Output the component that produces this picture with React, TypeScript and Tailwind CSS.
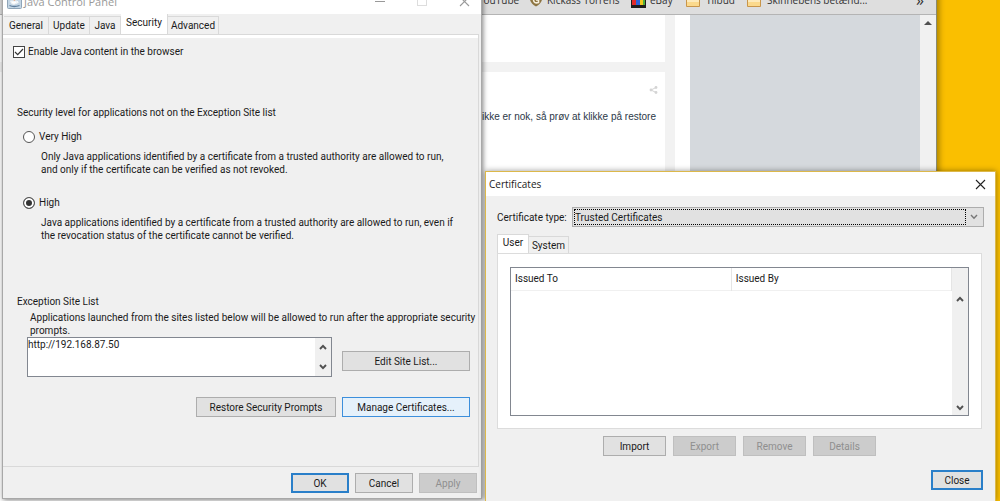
import { useState } from "react";
import type { ReactNode } from "react";

const ChevronIcon = ({ up = false, light = false }: { up?: boolean; light?: boolean }) => (
  <svg width="8" height="6" viewBox="0 0 8 6" fill="none" aria-hidden="true">
    <path
      d={up ? "M1 5 L4 1.8 L7 5" : "M1 1 L4 4.2 L7 1"}
      stroke={light ? "#777777" : "#505050"}
      strokeWidth={light ? 1.4 : 1.9}
    />
  </svg>
);

const CloseIcon = ({ color }: { color: string }) => (
  <svg width="11" height="11" viewBox="0 0 11 11" aria-hidden="true">
    <path d="M1 1 L10 10 M10 1 L1 10" stroke={color} strokeWidth="1.1" fill="none" />
  </svg>
);

const JavaIcon = () => (
  <svg width="15" height="16" viewBox="0 0 15 16" aria-hidden="true">
    <rect x="0.5" y="0.5" width="14" height="15" rx="1" fill="#c3d5e4" stroke="#8fa5b8" />
    <path d="M8 1.5 C5 4 9.5 5 7 8" stroke="#e07a3a" strokeWidth="1.3" fill="none" />
    <path d="M3.5 8 H10 V10 Q7 12.5 4.5 10.5 Z" fill="#ffffff" stroke="#e8eef3" />
    <path d="M10 8.5 Q12.5 8.5 10 10.5" stroke="#ffffff" fill="none" />
    <path d="M2.5 12.5 Q7 14.5 12.5 12.5" stroke="#5f7f9e" strokeWidth="1.3" fill="none" />
  </svg>
);

const FolderIcon = () => (
  <svg width="14" height="13" viewBox="0 0 14 13" className="shrink-0" aria-hidden="true">
    <path d="M0.5 1.5 H5 L6.5 3 H13.5 V12.5 H0.5 Z" fill="#fbd98c" stroke="#c8954a" />
    <path d="M1 5 H13 V8 H1 Z" fill="#fdeabb" />
  </svg>
);

const KickassIcon = () => (
  <svg width="14" height="14" viewBox="0 0 14 14" className="shrink-0" aria-hidden="true">
    <path d="M0.5 2 Q7 -1 13.5 2 Q14 10 7 13.5 Q0 10 0.5 2 Z" fill="#8d7442" />
    <path d="M9.5 4 Q5 3 4.5 7 Q5 11 9.5 9.5 V7 H7" stroke="#f6efdc" strokeWidth="1.6" fill="none" />
  </svg>
);

const EbayIcon = () => (
  <svg width="15" height="15" viewBox="0 0 15 15" className="shrink-0" aria-hidden="true">
    <rect width="15" height="15" fill="#1d1d1d" />
    <rect x="1" y="3" width="4" height="9" fill="#e02a2a" />
    <rect x="5" y="3" width="4" height="9" fill="#2a62d8" />
    <rect x="9" y="3" width="3" height="9" fill="#f3c81d" />
    <rect x="12" y="3" width="2" height="9" fill="#4fae3a" />
  </svg>
);

const ShareIcon = () => (
  <svg width="9" height="8" viewBox="0 0 9 8" aria-hidden="true">
    <path d="M7 1.5 L2 4 L7 6.5" stroke="#d4d4d4" fill="none" />
    <circle cx="7" cy="1.5" r="1.4" fill="#d4d4d4" />
    <circle cx="2" cy="4" r="1.4" fill="#d4d4d4" />
    <circle cx="7" cy="6.5" r="1.4" fill="#d4d4d4" />
  </svg>
);

const buttonStyles = {
  normal: "border border-[#adadad] bg-[#e1e1e1]",
  hover: "border border-[#3c8fdc] bg-[#e5f1fb]",
  focus: "border-2 border-[#2a7fc9] bg-[#e1e1e1]",
  disabled: "border border-[#bfbfbf] bg-[#cccccc] text-[#8f8f8f]",
};

const Button = ({
  children,
  variant = "normal",
  width,
}: {
  children: ReactNode;
  variant?: keyof typeof buttonStyles;
  width: string;
}) => (
  <button
    type="button"
    disabled={variant === "disabled"}
    className={`flex h-5 shrink-0 items-center justify-center whitespace-nowrap ${buttonStyles[variant]} ${width}`}
  >
    {children}
  </button>
);

const Browser = () => (
  <div className="absolute -top-4 right-[63px] bottom-0 left-0 flex flex-col border-r border-[#8a8a72] bg-white shadow-[2px_0_6px_rgba(0,0,0,0.35)]">
    <nav className="flex h-[31px] shrink-0 items-center border-b border-[#b4b4b4] bg-[#dedede] pt-[2px] pr-3 pl-[478px] font-['Open_Sans',sans-serif] text-[10px] whitespace-nowrap text-[#333333]">
      <a href="#youtube" className="w-[51px]">YouTube</a>
      <a href="#kickass" className="flex w-[102px] items-center gap-1">
        <KickassIcon />
        Kickass Torrens
      </a>
      <a href="#ebay" className="flex w-[55px] items-center gap-1">
        <EbayIcon />
        eBay
      </a>
      <a href="#tilbud" className="flex w-[61px] items-center gap-[6px]">
        <FolderIcon />
        Tilbud
      </a>
      <a href="#skinneben" className="flex items-center gap-[6px]">
        <FolderIcon />
        Skinnebens betænd...
      </a>
      <button type="button" className="ml-auto text-base leading-4" aria-label="More bookmarks">
        »
      </button>
    </nav>
    <div className="flex flex-1">
      <main className="mr-[15px] flex min-w-0 flex-1 flex-col gap-[10px] bg-[#f2f2f2] pr-[10px]">
        <div className="h-[47px] bg-white" />
        <article className="flex-1 bg-white pt-[14px]">
          <div className="flex justify-end pr-[7px]">
            <ShareIcon />
          </div>
          <p className="pt-[15px] pl-[482px] font-['Liberation_Sans',sans-serif] text-[10px] leading-4 whitespace-nowrap text-[#2c3848]">
            ikke er nok, så prøv at klikke på restore
          </p>
        </article>
      </main>
      <aside className="w-[230px] bg-[#d5d9dd]" />
      <div className="flex w-4 justify-center bg-[#f1f1f1] pt-[6px]">
        <svg width="8" height="4" viewBox="0 0 8 4" aria-hidden="true">
          <path d="M4 0 L8 4 H0 Z" fill="#505050" />
        </svg>
      </div>
    </div>
  </div>
);

const javaTabs = [
  { name: "General", width: "w-[45px]" },
  { name: "Update", width: "w-[41px]" },
  { name: "Java", width: "w-[31px]" },
  { name: "Security", width: "w-[47px]" },
  { name: "Advanced", width: "w-[51px]" },
];

const levels = [
  {
    id: "very-high",
    name: "Very High",
    lines: [
      "Only Java applications identified by a certificate from a trusted authority are allowed to run,",
      "and only if the certificate can be verified as not revoked.",
    ],
  },
  {
    id: "high",
    name: "High",
    lines: [
      "Java applications identified by a certificate from a trusted authority are allowed to run, even if",
      "the revocation status of the certificate cannot be verified.",
    ],
  },
];

const JavaControlPanel = () => {
  const [enabled, setEnabled] = useState(true);
  const [level, setLevel] = useState("high");

  return (
    <section className="absolute -top-4 left-[2px] w-[48%] border border-[#a8a8a8] bg-[#f0f0f0] shadow-[1px_1px_5px_rgba(0,0,0,0.5)]">
      <header className="flex h-[29px] items-center bg-white pt-[3px] pr-[11px] pl-1 text-[#999999]">
        <JavaIcon />
        <h1 className="ml-[2px] font-['Open_Sans',sans-serif] text-[11px]">Java Control Panel</h1>
        <div className="ml-auto flex items-center gap-8">
          <button type="button" aria-label="Minimize">
            <svg width="10" height="10" viewBox="0 0 10 10">
              <path d="M0 5.5 H10" stroke="#999999" />
            </svg>
          </button>
          <button type="button" aria-label="Maximize">
            <svg width="10" height="10" viewBox="0 0 10 10">
              <rect x="0.5" y="0.5" width="9" height="9" stroke="#dddddd" fill="none" />
            </svg>
          </button>
          <button type="button" aria-label="Close window">
            <CloseIcon color="#999999" />
          </button>
        </div>
      </header>

      <div className="flex h-5 items-end pl-px" role="tablist">
        {javaTabs.map((tab) => (
          <button
            key={tab.name}
            type="button"
            role="tab"
            aria-selected={tab.name === "Security"}
            className={`flex items-center justify-center border-r border-[#d9d9d9] ${tab.width} ${
              tab.name === "Security" ? "h-5 bg-white pb-1" : "h-[18px] border-t"
            }`}
          >
            {tab.name}
          </button>
        ))}
      </div>

      <div className="mr-[2px] border-t border-r border-b border-[#d9d9d9]">
        <div className="h-[3px] bg-white" />
        <div className="pt-[7px] pr-2 pb-[49px] pl-[10px]">
          <label className="flex items-center gap-[3px]">
            <input
              type="checkbox"
              checked={enabled}
              onChange={() => setEnabled(!enabled)}
              className="peer sr-only"
            />
            <span className="flex size-3 items-center justify-center border border-[#444444] bg-white">
              {enabled && (
                <svg width="10" height="8" viewBox="0 0 10 8" aria-hidden="true">
                  <path d="M1 4 L3.7 6.7 L9 1" stroke="#333333" strokeWidth="1.2" fill="none" />
                </svg>
              )}
            </span>
            Enable Java content in the browser
          </label>

          <fieldset className="mt-12 pl-1">
            <legend>Security level for applications not on the Exception Site list</legend>
            {levels.map((item, i) => (
              <div key={item.id} className={i === 0 ? "mt-[11px]" : "mt-5"}>
                <label className="flex items-center gap-1 pl-[6px]">
                  <input
                    type="radio"
                    name="level"
                    checked={level === item.id}
                    onChange={() => setLevel(item.id)}
                    className="size-3 appearance-none rounded-full border border-[#555555] bg-white checked:bg-[#333333] checked:shadow-[inset_0_0_0_2px_#ffffff]"
                  />
                  {item.name}
                </label>
                <p className="mt-[7px] pl-6 whitespace-nowrap">
                  {item.lines[0]}
                  <br />
                  {item.lines[1]}
                </p>
              </div>
            ))}
          </fieldset>

          <div className="mt-[53px] pl-1">
            <label htmlFor="sites">Exception Site List</label>
            <p className="mt-[3px] pl-[13px] whitespace-nowrap">
              Applications launched from the sites listed below will be allowed to run after the appropriate security
              <br />
              prompts.
            </p>
            <div className="flex items-end gap-[10px] pl-[10px]">
              <div className="flex h-10 flex-1 border border-[#828790] bg-white">
                <textarea
                  id="sites"
                  defaultValue="http://192.168.87.50"
                  className="min-w-0 flex-1 resize-none overflow-hidden outline-none"
                />
                <div className="flex w-4 flex-col items-center justify-between bg-[#f0f0f0] py-[6px]">
                  <ChevronIcon up />
                  <ChevronIcon />
                </div>
              </div>
              <div className="mb-[6px]">
                <Button width="w-32">Edit Site List...</Button>
              </div>
            </div>
            <div className="mt-5 flex justify-end gap-[6px]">
              <Button width="w-[140px]">Restore Security Prompts</Button>
              <Button width="w-32" variant="hover">
                Manage Certificates...
              </Button>
            </div>
          </div>
        </div>
      </div>

      <footer className="flex justify-end gap-[6px] pt-[6px] pr-1 pb-[5px]">
        <Button width="w-[58px]" variant="focus">OK</Button>
        <Button width="w-[58px]">Cancel</Button>
        <Button width="w-[58px]" variant="disabled">Apply</Button>
      </footer>
    </section>
  );
};

const CertificatesDialog = () => (
  <section className="absolute top-[171px] right-1 bottom-0 left-[485px] flex flex-col border border-b-0 border-[#dcb84a] bg-[#f0f0f0] shadow-[0_0_6px_rgba(0,0,0,0.4)]">
    <header className="flex h-6 items-center justify-between bg-white pr-[9px] pl-[3px]">
      <h2 className="font-['Open_Sans',sans-serif] text-[10px]">Certificates</h2>
      <button type="button" aria-label="Close dialog">
        <CloseIcon color="#222222" />
      </button>
    </header>

    <div className="flex flex-1 flex-col px-[11px] pt-[11px]">
      <div className="flex items-center">
        <label htmlFor="cert-type" className="w-[75px] whitespace-nowrap">Certificate type:</label>
        <div className="flex h-5 flex-1 items-center border border-[#adadad] bg-[#e1e1e1] p-px">
          <select
            id="cert-type"
            className="h-4 flex-1 appearance-none border border-dotted border-black"
          >
            <option>Trusted Certificates</option>
            <option>Secure Site</option>
          </select>
          <span className="flex w-4 justify-center">
            <ChevronIcon light />
          </span>
        </div>
      </div>

      <div className="mt-[7px] flex h-[19px] items-end" role="tablist">
        <button type="button" role="tab" aria-selected="true" className="h-[19px] w-8 border border-b-0 border-[#d9d9d9] bg-white pb-1">
          User
        </button>
        <button type="button" role="tab" aria-selected="false" className="h-[17px] w-10 border border-b-0 border-l-0 border-[#d9d9d9]">
          System
        </button>
      </div>
      <div className="mr-[2px] border border-[#dcdcdc] bg-white px-3 pt-[13px] pb-3">
        <div className="flex h-[149px] border border-[#828790]">
          <div className="flex-1">
            <table className="w-full table-fixed text-left">
              <thead>
                <tr className="h-[22px] border-b border-[#f0f0f0]">
                  <th className="border-r border-[#e5e5e5] pl-1 font-normal">Issued To</th>
                  <th className="border-r border-[#e5e5e5] pl-1 font-normal">Issued By</th>
                </tr>
              </thead>
            </table>
          </div>
          <div className="flex w-4 flex-col items-center justify-between bg-[#f0f0f0] pt-7 pb-1">
            <ChevronIcon up />
            <ChevronIcon />
          </div>
        </div>
      </div>

      <div className="mt-[7px] mr-[2px] flex justify-center gap-[7px]">
        <Button width="w-[63px]">Import</Button>
        <Button width="w-[63px]" variant="disabled">Export</Button>
        <Button width="w-[63px]" variant="disabled">Remove</Button>
        <Button width="w-[63px]" variant="disabled">Details</Button>
      </div>
      <div className="mt-[14px] mr-px flex justify-end">
        <Button width="w-[52px]" variant="focus">Close</Button>
      </div>
    </div>
  </section>
);

const App = () => (
  <div className="relative h-screen overflow-hidden bg-[#fabf00] font-[Roboto,'DejaVu_Sans_Condensed',sans-serif] text-[10px] leading-[13px] text-[#1a1a1a]">
    <Browser />
    <JavaControlPanel />
    <CertificatesDialog />
  </div>
);

export default App;
